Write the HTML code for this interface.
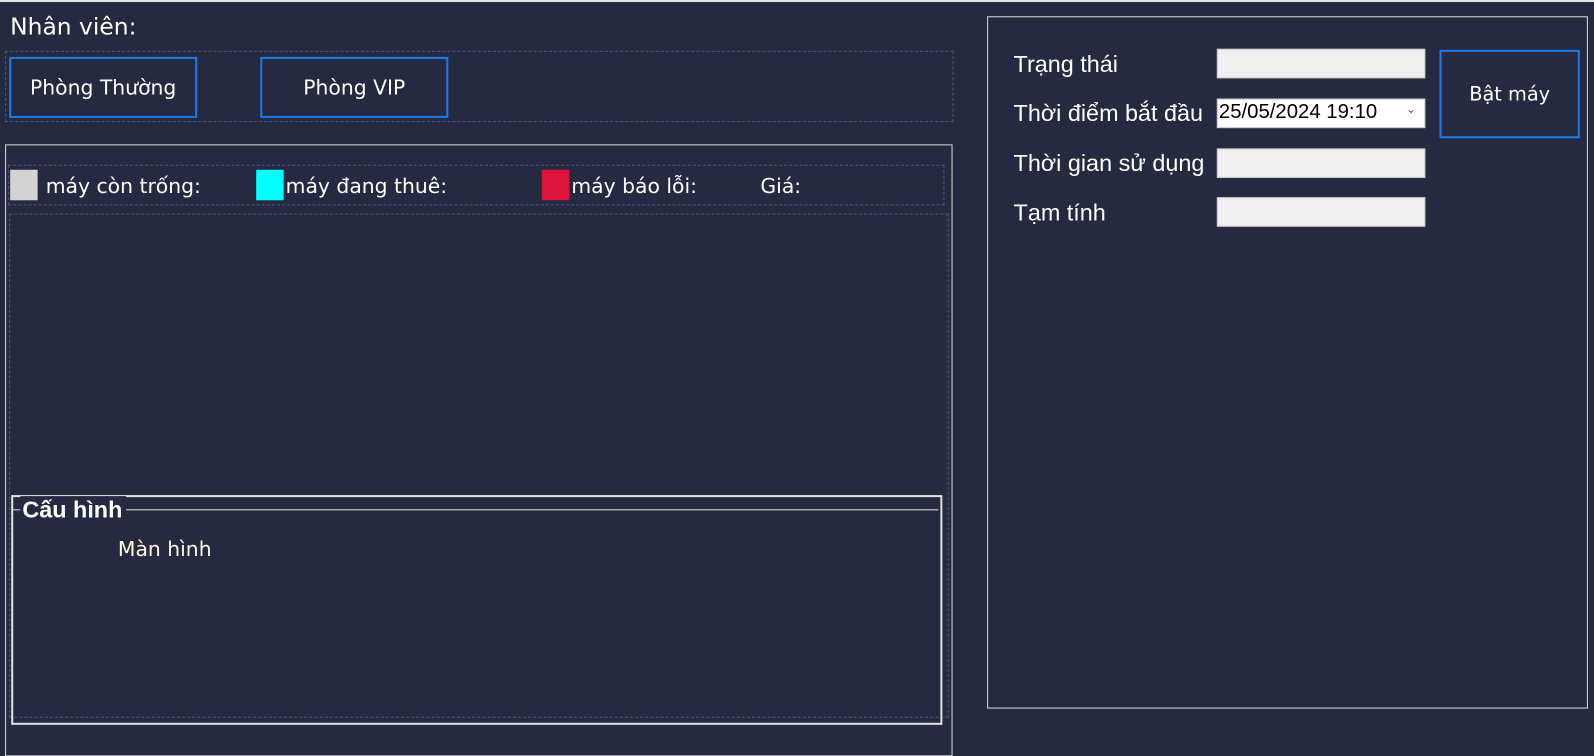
<!DOCTYPE html>
<html><head><meta charset="utf-8"><style>
body{margin:0;width:1594px;height:734px;background:#262a40;position:relative;overflow:hidden;font-family:"Liberation Sans","DejaVu Sans",sans-serif;color:#fff}
#w{position:absolute;left:0;top:0;width:1568px;height:722px;transform:scale(1.0166);transform-origin:0 0}
.a{position:absolute}
.dash{position:absolute;border:1px dashed #4a5585}
.btn{position:absolute;border:2px solid #1a7be8;box-sizing:border-box;display:flex;align-items:center;justify-content:center;font-size:19px;font-family:"DejaVu Sans",sans-serif}
.lbl{position:absolute;font-size:23px;left:997px}
.inp{position:absolute;left:1197px;width:205px;height:29px;background:#f0f0f0;box-sizing:border-box;border:1px solid #ccc}
.leg{position:absolute;font-size:20px;top:171px;font-family:"DejaVu Sans",sans-serif}
.sq{position:absolute;top:167px;width:27px;height:30px}
</style></head><body><div id="w">
<div class="a" style="left:0;top:0;width:1594px;height:2px;background:#e8e8e8"></div>
<div class="a" style="left:10px;top:14px;font-size:23px;font-family:'DejaVu Sans',sans-serif">Nhân viên:</div>
<div class="dash" style="left:5px;top:50px;width:931px;height:68px"></div>
<div class="btn" style="left:9px;top:56px;width:185px;height:60px;font-size:20px">Phòng Thường</div>
<div class="btn" style="left:256px;top:56px;width:185px;height:60px;font-size:20px">Phòng VIP</div>

<div class="a" style="left:5px;top:142px;width:930px;height:600px;border:1px solid #d8d8d8"></div>
<div class="dash" style="left:8px;top:162px;width:919px;height:38px"></div>
<div class="sq" style="left:10px;background:#d3d3d3"></div>
<div class="leg" style="left:45px">máy còn trống:</div>
<div class="sq" style="left:252px;background:#00ffff"></div>
<div class="leg" style="left:281px">máy đang thuê:</div>
<div class="sq" style="left:533px;background:#dc143c"></div>
<div class="leg" style="left:562px">máy báo lỗi:</div>
<div class="leg" style="left:748px">Giá:</div>
<div class="dash" style="left:9px;top:210px;width:922px;height:494px"></div>

<div class="a" style="left:11px;top:487px;width:912px;height:222px;border:2px solid #e0e0e0"></div>
<div class="a" style="left:13px;top:501px;width:910px;height:1px;background:#e0e0e0"></div>
<div class="a" style="left:20px;top:488px;padding:0 4px 0 2px;background:#262a40;font-size:23px;font-weight:bold">Cấu hình</div>
<div class="a" style="left:116px;top:528px;font-size:20px;color:#fffbe0;font-family:'DejaVu Sans',sans-serif">Màn hình</div>

<div class="a" style="left:971px;top:16px;width:589px;height:679px;border:1px solid #d8d8d8"></div>
<div class="lbl" style="top:50px">Trạng thái</div>
<div class="lbl" style="top:98px">Thời điểm bắt đầu</div>
<div class="lbl" style="top:147px">Thời gian sử dụng</div>
<div class="lbl" style="top:196px">Tạm tính</div>
<div class="inp" style="top:48px"></div>
<div class="inp" style="top:97px;background:#fff;color:#000;font-size:20px;padding:1px 0 0 1px">25/05/2024 19:10<span style="position:absolute;right:8px;top:2px;font-size:12px;color:#555">&#8964;</span></div>
<div class="inp" style="top:146px"></div>
<div class="inp" style="top:194px"></div>
<div class="btn" style="left:1416px;top:49px;width:138px;height:87px">Bật máy</div>
</div></body></html>
